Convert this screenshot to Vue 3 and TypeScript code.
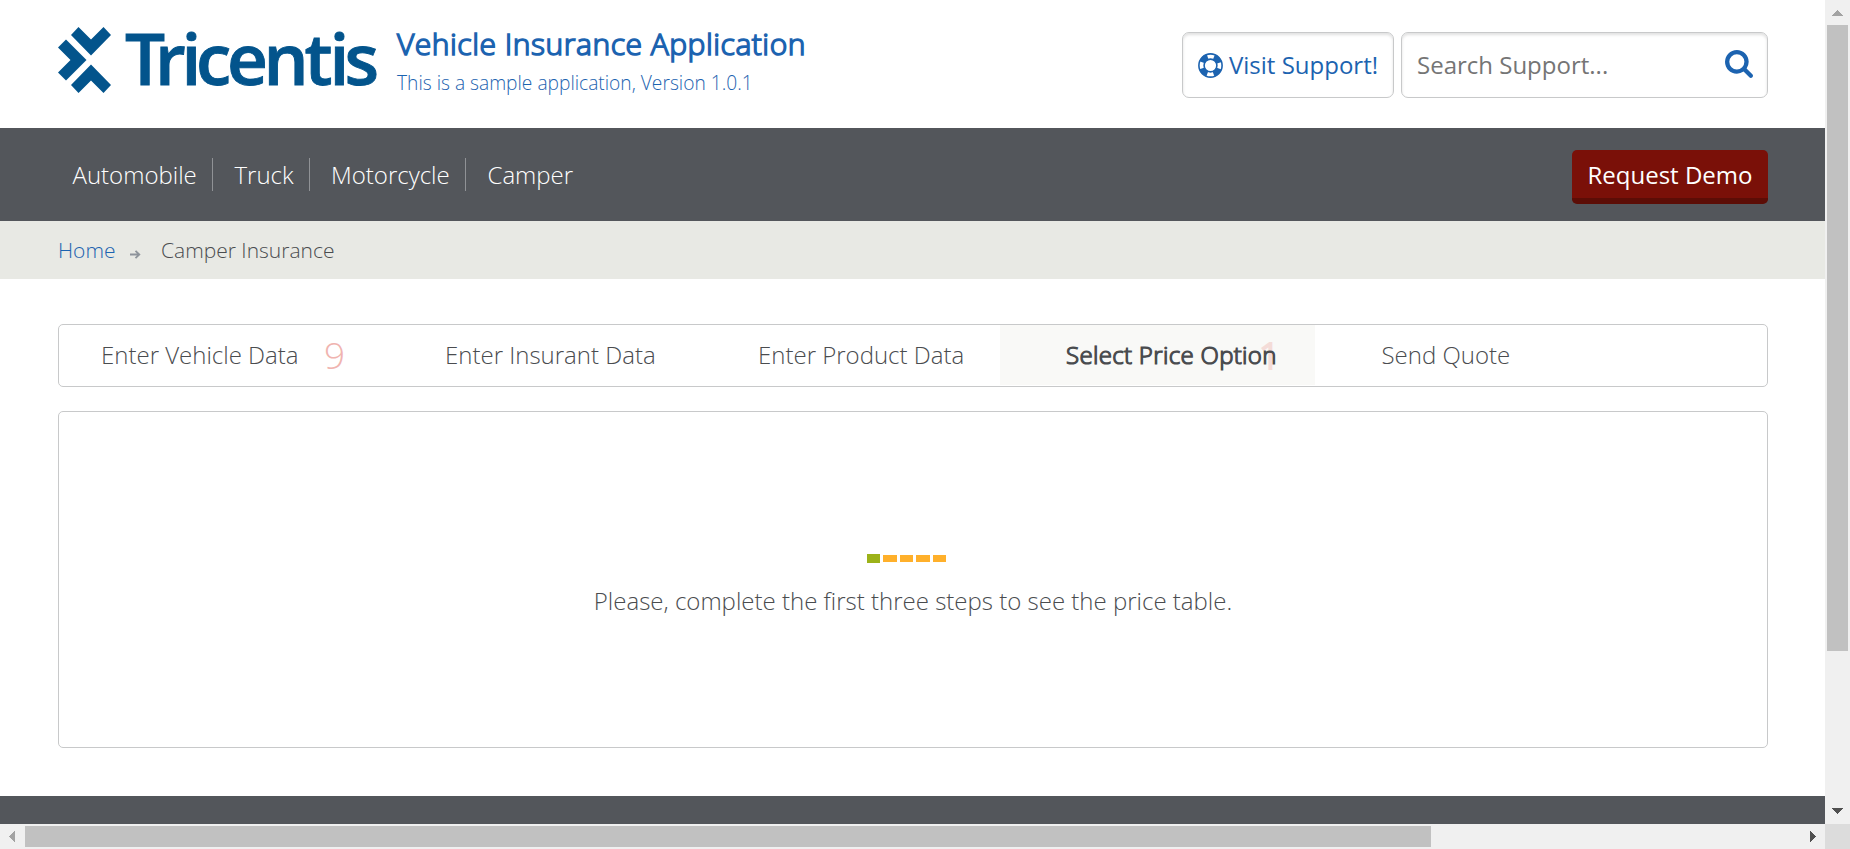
<script setup lang="ts">
interface NavItem { label: string; cls: string }
interface Step { label: string; cls: string; count?: string; active?: boolean }

const navItems: NavItem[] = [
  { label: 'Automobile', cls: 'nav-automobile' },
  { label: 'Truck', cls: 'nav-truck' },
  { label: 'Motorcycle', cls: 'nav-motorcycle' },
  { label: 'Camper', cls: 'nav-camper' },
]

const steps: Step[] = [
  { label: 'Enter Vehicle Data', cls: 'step-vehicle', count: '9' },
  { label: 'Enter Insurant Data', cls: 'step-insurant' },
  { label: 'Enter Product Data', cls: 'step-product' },
  { label: 'Select Price Option', cls: 'step-price', count: '1', active: true },
  { label: 'Send Quote', cls: 'step-quote' },
]
</script>

<template>
  <div class="window">
    <div class="page">
      <header class="header">
        <svg class="logo" width="320" height="74" viewBox="0 0 320 74" role="img">
          <g fill="#03548c">
            <path d="M13 8 L20.5 0 L33 12.500 L45.500 0 L53 8 L33 28.500 Z" />
            <path d="M0 20.500 L8 12.500 L28.500 33 L8 53.500 L0 45.500 L12.500 33 Z" />
            <path d="M33 37.500 L53 58 L45.500 66 L33 53.500 L20.500 66 L13 58 Z" />
          </g>
          <text class="wordmark" x="67 97 123.500 138 169 205.500 246.500 271.500 286.500" y="58">Tricentis</text>
        </svg>
        <div class="titles">
          <h1 class="title">Vehicle Insurance Application</h1>
          <p class="subtitle">This is a sample application, Version 1.0.1</p>
        </div>
        <a class="field support">
          <svg width="25" height="25" viewBox="0 0 25 25">
            <circle cx="12.500" cy="12.500" r="8.900" fill="none" stroke="#1c63b0" stroke-width="5.800" stroke-dasharray="7.700 6.280" stroke-dashoffset="-3.140" />
            <circle cx="12.500" cy="12.500" r="11.600" fill="none" stroke="#1c63b0" stroke-width="1.600" />
            <circle cx="12.500" cy="12.500" r="6.400" fill="none" stroke="#1c63b0" stroke-width="1.600" />
          </svg>
          <span class="support-text">Visit Support!</span>
        </a>
        <div class="field search">
          <span class="search-text">Search Support...</span>
          <svg width="28" height="28" viewBox="64 128 1664 1664">
            <path fill="#1c63b0" d="M1216 832q0-185-131.500-316.500t-316.500-131.500-316.500 131.500-131.500 316.500 131.500 316.500 316.500 131.500 316.500-131.500 131.500-316.500zm512 832q0 52-38 90t-90 38q-54 0-90-38l-343-342q-179 124-399 124-143 0-273.500-55.500t-225-150-150-225-55.500-273.500 55.500-273.500 150-225 225-150 273.500-55.500 273.500 55.500 225 150 150 225 55.500 273.500q0 220-124 399l343 343q37 37 37 90z" />
          </svg>
        </div>
      </header>

      <nav class="nav">
        <a v-for="item in navItems" :key="item.label" class="nav-item" :class="item.cls">
          <span>{{ item.label }}</span>
        </a>
        <button class="demo" type="button">Request Demo</button>
      </nav>

      <div class="crumbs">
        <a class="crumb-home">Home</a>
        <svg class="crumb-arrow" width="11" height="9" viewBox="0 0 11 9">
          <path d="M0 4.500 H9 M5.500 0.800 L9.300 4.500 L5.500 8.200" fill="none" stroke="#8e949b" stroke-width="1.800" />
        </svg>
        <span>Camper Insurance</span>
      </div>

      <main class="content">
        <div class="steps">
          <a v-for="s in steps" :key="s.label" class="step" :class="[s.cls, { active: s.active }]">
            <span class="step-label">{{ s.label }}</span>
            <span v-if="s.count" class="count">{{ s.count }}</span>
          </a>
        </div>
        <section class="panel">
          <div class="loader">
            <i class="block current"></i>
            <i v-for="n in 4" :key="n" class="block"></i>
          </div>
          <p class="message">Please, complete the first three steps to see the price table.</p>
        </section>
      </main>
      <footer class="footer"></footer>
    </div>

    <div class="vbar">
      <svg class="bar-end" width="25" height="25"><path d="M12 10 h1 l5 6 h-11 z" fill="#a3a3a3" shape-rendering="crispEdges" /></svg>
      <div class="vthumb"></div>
      <svg class="bar-end" width="25" height="25"><path d="M7 9 h11 l-5 6 h-1 z" fill="#505050" shape-rendering="crispEdges" /></svg>
    </div>
    <div class="hbar">
      <svg class="bar-end" width="25" height="25"><path d="M15 7 v11 l-6 -5 v-1 z" fill="#a3a3a3" shape-rendering="crispEdges" /></svg>
      <div class="hthumb"></div>
      <svg class="bar-end" width="25" height="25"><path d="M10 7 v11 l6 -5 v-1 z" fill="#505050" shape-rendering="crispEdges" /></svg>
    </div>
    <div class="corner"></div>
  </div>
</template>

<style>
body { margin: 0; overflow: hidden; background: #fff; }
</style>

<style scoped>
* { box-sizing: border-box; }
.window {
  display: grid;
  grid-template-columns: 1825px 25px;
  grid-template-rows: 824px 25px;
  width: 1850px;
  height: 849px;
  font-family: "Open Sans", "Noto Sans", sans-serif;
  font-weight: 300;
  font-size: 24px;
  color: #4a4c4f;
  white-space: nowrap;
}
.page { display: flex; flex-direction: column; overflow: hidden; background: #fff; }

.header { display: flex; align-items: flex-start; height: 128px; padding-left: 58px; }
.logo { flex: none; margin-top: 27px; overflow: visible; }
.wordmark { font-size: 71px; font-weight: 600; fill: #03548c; stroke: #03548c; stroke-width: 0.900px; }
.titles { flex: none; width: 785px; margin-left: 19px; padding-top: 24px; color: #1c63b0; }
.title { margin: 0; font-size: 30px; line-height: 40px; font-weight: 300; letter-spacing: 0.520px; -webkit-text-stroke: 1.500px #1c63b0; }
.subtitle { margin: 4px 0 0; font-size: 19.200px; line-height: 30px; }
.field {
  display: flex;
  align-items: center;
  height: 66px;
  margin-top: 32px;
  border: 1px solid #c8c9ca;
  border-radius: 7px;
  box-shadow: inset 0 2px 3px rgba(0, 0, 0, 0.120);
  font-weight: 400;
}
.support { width: 212px; padding-left: 15px; color: #1c63b0; }
.support-text { margin-left: 6px; padding-bottom: 2px; }
.search { justify-content: space-between; width: 367px; margin-left: 7px; padding: 0 14px 2px 15px; color: #757575; }

.nav { display: flex; align-items: center; height: 93px; padding: 0 57px 0 58px; background: #53565b; color: #fff; }
.nav-item { display: flex; align-items: center; height: 33px; border-right: 1px solid #909296; }
.nav-automobile { width: 155px; padding-left: 14.500px; }
.nav-truck { width: 97px; padding-left: 21.500px; }
.nav-motorcycle { width: 156px; padding-left: 21px; }
.nav-camper { border: 0; padding-left: 21.500px; }
.demo {
  width: 196px;
  height: 54px;
  margin: 5px 0 0 auto;
  padding: 1px 0 0;
  border: 0;
  border-bottom: 6px solid #5c0d06;
  border-radius: 5px;
  background: #7a1008;
  color: #fff;
  font: 400 24px/40px "Open Sans", sans-serif;
}

.crumbs { display: flex; align-items: center; height: 58px; padding-left: 58px; background: #e8e9e4; font-size: 21px; }
.crumb-home { width: 72px; color: #1c63b0; }
.crumb-arrow { margin: 8px 20px 0 0; }

.content { height: 517px; padding: 45px 57px 0 58px; }
.steps { display: flex; height: 63px; border: 1px solid #c8c9ca; border-radius: 5px; }
.step { display: flex; align-items: center; height: 60px; position: relative; }
.step-label { padding-bottom: 2px; }
.step-vehicle { width: 342px; padding-left: 42px; }
.step-insurant { width: 312px; padding-left: 44px; }
.step-product { width: 287px; padding-left: 45px; }
.step-price { width: 315px; padding-left: 66px; }
.step-quote { padding-left: 66.500px; }
.active { background: #f9f9f7; }
.active .step-label { letter-spacing: 0.330px; -webkit-text-stroke: 1.200px #4a4c4f; }
.count { position: absolute; left: 265px; top: 5px; font-size: 37px; line-height: 50px; color: #f0b4b0; }
.step-price .count { left: 259px; color: #f4dcd8; -webkit-text-stroke: 2px #f4dcd8; }
.step-price .step-label { position: relative; z-index: 1; }
.panel { display: flex; flex-direction: column; align-items: center; height: 337px; margin-top: 24px; padding-top: 142px; border: 1px solid #c8c9ca; border-radius: 5px; }
.loader { display: flex; align-items: center; gap: 3px; height: 9px; margin-right: 13px; }
.block { width: 13.400px; height: 7px; background: #ffb02b; }
.current { height: 9px; background: #9cb219; }
.message { margin: 21px 0 0; line-height: 33px; }
.footer { flex: 1; background: #53565b; }

.vbar { display: flex; flex-direction: column; background: #f0f0f0; }
.vthumb { width: 21px; height: 626px; margin: 0 2px 148px; background: #c1c1c1; }
.hbar { display: flex; background: #f0f0f0; }
.hthumb { width: 1406px; height: 21px; margin: 2px 369px 0 0; background: #c1c1c1; }
.bar-end { display: block; flex: none; }
.corner { background: #dcdcdc; }
</style>
